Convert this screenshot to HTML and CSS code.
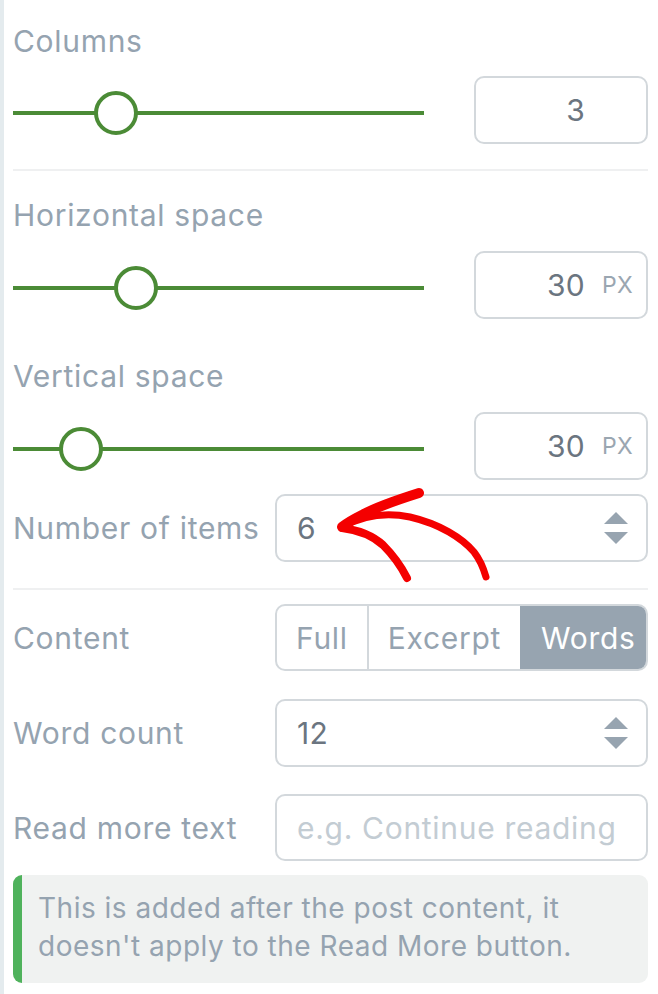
FILE: index.html
```html
<!DOCTYPE html>
<html lang="en">
<head>
<meta charset="utf-8">
<title>Settings</title>
<link rel="stylesheet" href="styles.css">
</head>
<body>
<div class="panel">
  <div class="field first">
    <div class="label">Columns</div>
    <div class="slider-row">
      <div class="slider"><div class="track"></div><div class="thumb" style="left:81px"></div></div>
      <div class="num-box"><span class="num">3</span><span class="unit"></span></div>
    </div>
  </div>
  <div class="divider d1"></div>
  <div class="field f2">
    <div class="label">Horizontal space</div>
    <div class="slider-row">
      <div class="slider"><div class="track"></div><div class="thumb" style="left:101px"></div></div>
      <div class="num-box"><span class="num">30</span><span class="unit">px</span></div>
    </div>
  </div>
  <div class="field f3">
    <div class="label">Vertical space</div>
    <div class="slider-row">
      <div class="slider"><div class="track"></div><div class="thumb" style="left:46px"></div></div>
      <div class="num-box"><span class="num">30</span><span class="unit">px</span></div>
    </div>
  </div>
  <div class="row r-items">
    <div class="row-label">Number of items</div>
    <div class="box spin-box">
      <span class="val">6</span>
      <span class="spinner"><span class="up"></span><span class="down"></span></span>
    </div>
  </div>
  <div class="divider d2"></div>
  <div class="row r-content">
    <div class="row-label">Content</div>
    <div class="segmented">
      <span class="seg">Full</span>
      <span class="seg">Excerpt</span>
      <span class="seg active">Words</span>
    </div>
  </div>
  <div class="row r-words">
    <div class="row-label">Word count</div>
    <div class="box spin-box">
      <span class="val">12</span>
      <span class="spinner"><span class="up"></span><span class="down"></span></span>
    </div>
  </div>
  <div class="row r-more">
    <div class="row-label">Read more text</div>
    <div class="box text-box"><span class="placeholder">e.g. Continue reading</span></div>
  </div>
  <div class="note">This is added after the post content, it doesn't apply to the Read More button.</div>
</div>
<svg class="annotation" viewBox="0 0 658 994" width="658" height="994" aria-hidden="true">
  <g fill="none" stroke="#f40000" stroke-linecap="round" stroke-linejoin="round">
    <path d="M419 493 C400 499 378 506 362 515 C354 519 347 523 342 527" stroke-width="10"/>
    <path d="M342 527 C362 516 386 512 410 517 C440 524 462 538 474 552 C481 561 484 570 486 577" stroke-width="7"/>
    <path d="M342 528 C358 530 372 535 383 545 C393 555 401 566 407 578" stroke-width="8"/>
  </g>
</svg>
</body>
</html>
```

FILE: styles.css
```css
* { box-sizing: border-box; }

html, body {
  margin: 0;
  padding: 0;
  background: #ffffff;
}

body {
  width: 658px;
  height: 994px;
  position: relative;
  overflow: hidden;
  font-family: "Inter", "Noto Sans", sans-serif;
  border-left: 4px solid #e4ebee;
}

.panel {
  padding: 23px 10px 0 9px;
  display: flex;
  flex-direction: column;
}

.label {
  font-size: 30px;
  line-height: 36px;
  color: #95a3b0;
  letter-spacing: 0.7px;
}

.field .slider-row {
  margin-top: 17px;
}

.f2 { margin-top: 26px; }
.f3 { margin-top: 39px; }
.f2 .slider-row, .f3 .slider-row { margin-top: 18px; }

.slider-row {
  display: flex;
  align-items: center;
  gap: 50px;
  height: 68px;
}

.slider {
  position: relative;
  width: 411px;
  height: 44px;
  margin-top: 5px;
}

.track {
  position: absolute;
  left: 0;
  right: 0;
  top: 20px;
  height: 4px;
  background: #4b8b36;
}

.thumb {
  position: absolute;
  top: 0;
  width: 44px;
  height: 44px;
  border-radius: 50%;
  border: 4px solid #4b8b36;
  background: #ffffff;
}

.num-box {
  width: 174px;
  height: 68px;
  border: 2px solid #d3d8dc;
  border-radius: 10px;
  display: flex;
  align-items: center;
  justify-content: flex-end;
  padding-right: 13px;
}

.num {
  font-size: 30px;
  color: #6b7580;
  letter-spacing: 0.3px;
}

.unit {
  width: 31px;
  margin-left: 17px;
  font-size: 23px;
  color: #9aa6b1;
  text-transform: uppercase;
  letter-spacing: 0.4px;
}

.divider {
  height: 2px;
  background: #eff0f1;
}

.d1 { margin-top: 25px; }

.row {
  display: grid;
  grid-template-columns: 262px 1fr;
  align-items: center;
  height: 68px;
}

.r-items { margin-top: 14px; }
.d2 { margin-top: 26px; }
.r-content { margin-top: 14px; height: 67px; }
.r-words { margin-top: 28px; }
.r-more { margin-top: 27px; height: 67px; }

.row-label {
  font-size: 30px;
  color: #95a3b0;
  letter-spacing: 0.7px;
}

.box {
  height: 100%;
  border: 2px solid #d3d8dc;
  border-radius: 10px;
  display: flex;
  align-items: center;
  padding-left: 20px;
  padding-right: 18px;
}

.val {
  font-size: 30px;
  color: #6b7580;
  flex: 1;
  letter-spacing: 0.3px;
}

.spinner {
  display: flex;
  flex-direction: column;
  gap: 8px;
  width: 24px;
}

.up, .down {
  width: 0;
  height: 0;
  border-left: 12px solid transparent;
  border-right: 12px solid transparent;
}

.up { border-bottom: 12px solid #97a4b0; }
.down { border-top: 12px solid #97a4b0; }

.placeholder {
  font-size: 30px;
  color: #c3ccd3;
  white-space: nowrap;
  letter-spacing: 0.7px;
}

.segmented {
  height: 100%;
  display: flex;
  border: 2px solid #d3d8dc;
  border-radius: 10px;
  overflow: hidden;
}

.seg {
  display: flex;
  align-items: center;
  justify-content: center;
  padding: 0 19px;
  font-size: 30px;
  color: #95a3b0;
  border-left: 2px solid #d3d8dc;
  letter-spacing: 0.7px;
}

.seg:first-child { border-left: none; }

.seg.active {
  flex: 1;
  background: #97a4b0;
  color: #ffffff;
  border-left-color: #97a4b0;
}

.note {
  margin-top: 14px;
  height: 108px;
  background: #f0f2f1;
  border-left: 9px solid #4fb25c;
  border-radius: 9px;
  padding: 14px 40px 0 16px;
  font-size: 28px;
  line-height: 38px;
  letter-spacing: 0.5px;
  color: #95a3b0;
}

.annotation {
  position: absolute;
  left: -4px;
  top: 0;
  pointer-events: none;
}
```
